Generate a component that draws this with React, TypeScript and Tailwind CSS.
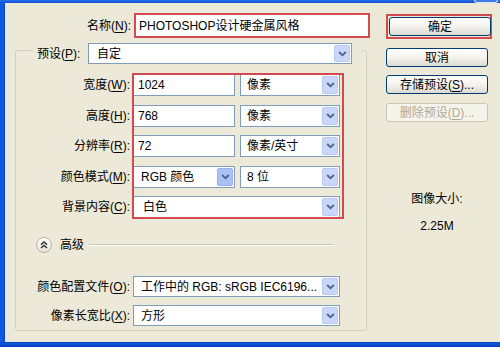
import React from "react";

const FONT = "font-['Liberation_Sans','Noto_Sans_CJK_SC',sans-serif]";

const Chevron = () => (
  <svg width="9" height="6" viewBox="0 0 9 6">
    <path d="M1.2 1 L4.5 4.3 L7.8 1" stroke="#4d6185" strokeWidth="1.8" fill="none" />
  </svg>
);

type SelectProps = { value: string; className?: string; hot?: boolean; textPad?: string };

const Select = ({ value, className = "", hot, textPad = "pl-[5px]" }: SelectProps) => (
  <div className={`flex items-stretch bg-white border border-[#7f9db9] p-[1px] ${className}`}>
    <span className={`flex-1 flex items-center whitespace-nowrap overflow-hidden ${textPad}`}>{value}</span>
    <span
      className={`w-[16px] flex items-center justify-center rounded-[2px] border ${
        hot ? "bg-[#a9c1f7] border-[#98b1ee]" : "bg-[#c8d7fa] border-[#b8caf3]"
      }`}
    >
      <Chevron />
    </span>
  </div>
);

const TextInput = ({ value, className = "" }: { value: string; className?: string }) => (
  <div className={`flex items-center bg-white border border-[#7f9db9] pl-[4px] ${className}`}>{value}</div>
);

const Label = ({ text, className = "" }: { text: React.ReactNode; className?: string }) => (
  <div className={`text-right whitespace-nowrap pr-[3px] ${className}`}>{text}</div>
);

const Key = ({ k }: { k: string }) => <span className="underline underline-offset-2">{k}</span>;

type BtnProps = { text: React.ReactNode; disabled?: boolean; className?: string };

const Button = ({ text, disabled, className = "" }: BtnProps) => (
  <div
    className={`h-[19px] w-[102px] flex items-center justify-center rounded-[3px] border ${
      disabled
        ? "border-[#c9c7ba] bg-[#f5f4ea] text-[#aca899]"
        : "border-[#003c74] bg-gradient-to-b from-white via-[#f4f3ee] to-[#dcdad0] text-black"
    } ${className}`}
  >
    {text}
  </div>
);

export default function App() {
  return (
    <div className={`w-[500px] h-[347px] overflow-hidden flex flex-col bg-[#0b5ae0] text-[12px] leading-none text-black ${FONT}`}>
      {/* title bar edge */}
      <div className="h-[3px] flex justify-end bg-gradient-to-b from-[#2a6ee8] to-[#0a4fd6]">
        <div className="w-[24px] mr-[2px] rounded-b-[3px] border border-t-0 border-[#d8e2f8] bg-[#3f7bea]" />
      </div>

      <div className="flex-1 flex pl-[4px]">
        <div className="flex-1 flex bg-[#ece9d8] border-l border-[#0846c2]">
          {/* left column */}
          <div className="w-[367px] flex flex-col">
            {/* name */}
            <div className="flex items-center mt-[10px] h-[25px]">
              <Label text={<>名称(<Key k="N" />):</>} className="w-[129px]" />
              <div className="w-[236px] h-[25px] flex items-center bg-white border-2 border-[#d24a50] pl-[3px]">
                PHOTOSHOP设计硬金属风格
              </div>
            </div>

            {/* group box */}
            <div className="ml-[10px] w-[352px] h-[281px] mt-[12px] border border-[#d0d0bf] rounded-[3px] flex flex-col">
              {/* legend */}
              <div className="-mt-[8px] ml-[17px] mr-[4px] bg-[#ece9d8] flex items-center h-[21px] pr-[10px]">
                <div className="pl-[4px] w-[55px]">
                  预设(<Key k="P" />):
                </div>
                <Select value="自定" className="flex-1 h-[21px]" textPad="pl-[7px]" />
              </div>

              {/* size rows */}
              <div className="relative mt-[10px] flex flex-col gap-[8.5px]">
                <div className="flex items-center h-[22px]">
                  <Label text={<>宽度(<Key k="W" />):</>} className="w-[117px]" />
                  <TextInput value="1024" className="w-[102px] h-[22px]" />
                  <Select value="像素" className="w-[100px] h-[22px] ml-[5px]" />
                </div>
                <div className="flex items-center h-[22px]">
                  <Label text={<>高度(<Key k="H" />):</>} className="w-[117px]" />
                  <TextInput value="768" className="w-[102px] h-[22px]" />
                  <Select value="像素" className="w-[100px] h-[22px] ml-[5px]" />
                </div>
                <div className="flex items-center h-[22px]">
                  <Label text={<>分辨率(<Key k="R" />):</>} className="w-[117px]" />
                  <TextInput value="72" className="w-[102px] h-[22px]" />
                  <Select value="像素/英寸" className="w-[100px] h-[22px] ml-[5px]" />
                </div>
                <div className="flex items-center h-[22px]">
                  <Label text={<>颜色模式(<Key k="M" />):</>} className="w-[117px]" />
                  <Select value="RGB 颜色" hot className="w-[102px] h-[22px]" textPad="pl-[6px]" />
                  <Select value="8 位" className="w-[100px] h-[22px] ml-[5px]" />
                </div>
                <div className="flex items-center h-[22px]">
                  <Label text={<>背景内容(<Key k="C" />):</>} className="w-[117px]" />
                  <Select value="白色" className="w-[207px] h-[22px]" textPad="pl-[8px]" />
                </div>
                {/* annotation box */}
                <div className="absolute left-[116px] -top-[1px] w-[212px] h-[146px] border-2 border-[#d24a50] pointer-events-none" />
              </div>

              {/* advanced */}
              <div className="flex items-center mt-[19px] ml-[20px] h-[16px]">
                <div className="w-[16px] h-[16px] rounded-full border border-[#b8b5a6] bg-gradient-to-b from-white to-[#e4e2d8] flex items-center justify-center">
                  <svg width="8" height="8" viewBox="0 0 8 8">
                    <path d="M1 3.6 L4 1 L7 3.6 M1 7 L4 4.4 L7 7" stroke="#333" strokeWidth="1.4" fill="none" />
                  </svg>
                </div>
                <span className="ml-[8px]">高级</span>
                <div className="flex-1 ml-[5px] mr-[33px] border-t border-[#c8c6b8] border-b-white border-b" />
              </div>

              {/* advanced rows */}
              <div className="mt-[23px] flex flex-col gap-[8px]">
                <div className="flex items-center h-[21px]">
                  <Label text={<>颜色配置文件(<Key k="O" />):</>} className="w-[117px]" />
                  <Select value="工作中的 RGB: sRGB IEC6196..." className="w-[207px] h-[21px]" textPad="pl-[6px]" />
                </div>
                <div className="flex items-center h-[21px]">
                  <Label text={<>像素长宽比(<Key k="X" />):</>} className="w-[117px]" />
                  <Select value="方形" className="w-[207px] h-[21px]" textPad="pl-[6px]" />
                </div>
              </div>
            </div>
          </div>

          {/* right column */}
          <div className="flex-1 flex flex-col pl-[14px]">
            <div className="mt-[11px] w-[106px] p-[1px] border-2 border-[#d24a50]">
              <Button text="确定" className="w-[101px] h-[18px]" />
            </div>
            <Button text="取消" className="mt-[9px]" />
            <Button text={<>存储预设(<Key k="S" />)...</>} className="mt-[8px]" />
            <Button text={<>删除预设(<Key k="D" />)...</>} disabled className="mt-[9px]" />
            <div className="mt-[71px] w-[102px] flex flex-col items-center gap-[15px]">
              <span>图像大小:</span>
              <span>2.25M</span>
            </div>
          </div>
        </div>
      </div>

      {/* bottom frame */}
      <div className="h-[5px] bg-gradient-to-b from-[#0b5ae0] to-[#0a3fb8] border-t border-[#0846c2]" />
    </div>
  );
}
